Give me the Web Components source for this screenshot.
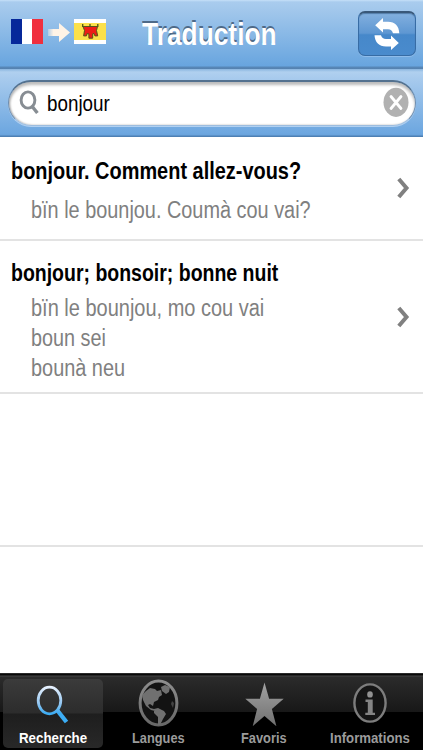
<!DOCTYPE html>
<html lang="fr"><head><meta charset="utf-8"><title>Traduction</title>
<style>html,body{margin:0;height:100%;background:#fff;overflow:hidden}body{font-family:"Liberation Sans",Arial,sans-serif}</style></head>
<body><translate-app></translate-app>
<script>
const define=(name,html,setup)=>customElements.define(name,class extends HTMLElement{
  connectedCallback(){
    if(this.shadowRoot)return;
    const t=document.createElement('template');t.innerHTML=html;
    this.attachShadow({mode:'open'}).appendChild(t.content.cloneNode(true));
    if(setup)setup(this,this.shadowRoot);
  }
});

/* One line of text condensed horizontally to a given width */
define('fit-text',`<style>:host{display:block;flex:none;white-space:nowrap}span{display:inline-block;transform-origin:0 50%}</style><span><slot></slot></span>`,
(h,r)=>{const s=r.querySelector('span'),w=+h.getAttribute('w');h.style.width=w+'px';s.style.transform='scaleX('+w/s.offsetWidth+')';});

define('french-flag',`<style>:host{display:flex;width:32px;height:25px}i{flex:1}</style><i style="background:#06289a"></i><i style="background:#fff"></i><i style="background:#f02f3e"></i>`);

define('auvergne-flag',`<style>:host{display:block;width:32px;height:25px}svg{display:block}</style>
<svg width="32" height="25" viewBox="0 0 32 25"><path fill="#fff" d="M0 0h32v25H0z"/><path fill="#fbe04a" d="M0 4h32v17H0z"/>
<path fill="#ed1c16" stroke="#58531b" stroke-width="1" d="M9 7.5h14.5l-1 4 1.2 5.4h-2.8l-.9-2.4-1.3.3v4.4h-3.8v-4.3l-2-.2-.4 2.2H9.6l.9-5.4z"/>
<path stroke="#48521c" stroke-width="1.3" d="M8.7 5v3M16 5v3M23.8 5v3"/></svg>`);

define('refresh-button',`<style>:host{display:flex;box-sizing:border-box;width:58px;height:45px;border:1px solid #376ca5;border-top:2px solid #395879;border-radius:7px;background:linear-gradient(#83b0df,#5e97d2 48%,#4688ca 52%,#4a8bcd);box-shadow:0 1px 0 #8fbcea,inset 0 1px 1px #537da8;align-items:center;justify-content:center}</style>
<svg width="28" height="34" viewBox="0 0 28 34"><g fill="#fff"><path d="M2.2 8.2 10 1v3.8h5C22 4.8 26 9 26.3 16.3H20c-.8-2.8-2.3-4-5-4H10V15.5z"/><path d="M25.8 26 18 33v-3.6h-5C6 29.4 2 25.5 1.5 18.2H8c.8 2.6 2.3 3.8 5 3.8h5v-3.5z"/></g></svg>`);

define('title-bar',`<style>:host{display:flex;box-sizing:border-box;height:69px;padding:0 7px 0 11px;background:linear-gradient(#c6e0f8 0,#a9ccee 2px,#a0c6eb 12px,#68a5df 66px,#5788b9 67px,#5581ae 69px)}
.flags{display:flex;width:131px;padding-top:19px}.arrow{margin:3px 3px 0 4px;width:24px;height:20px}
fit-text{font:bold 32px/40px "Liberation Sans",sans-serif;color:#fff;text-shadow:0 -2px 0 #4e6a88;padding-top:14px}refresh-button{margin:11px 0 0 auto}</style>
<div class="flags"><french-flag></french-flag><svg class="arrow" viewBox="0 0 24 20"><defs><linearGradient id="a"><stop stop-color="#fff3e6" stop-opacity=".35"/><stop offset=".25" stop-color="#fff3e6"/></linearGradient></defs><path fill="url(#a)" d="M1 7h11V1l11 9.5L12 20v-6H1z"/></svg><auvergne-flag></auvergne-flag></div>
<fit-text w="135">Traduction</fit-text><refresh-button></refresh-button>`);

define('search-bar',`<style>:host{display:flex;box-sizing:border-box;height:68px;padding:11px 7px 11px 8px;background:linear-gradient(#89b5df 0,#b0d0ef 3px,#a7caed 10px,#6da7e0 64px,#69a3dc 66px,#4d80b4 67px)}
.field{display:flex;flex:1;align-items:flex-start;box-sizing:border-box;border-radius:23px;border:1px solid #6c8cae;border-top:2px solid #53718f;border-bottom-color:#9dbddf;background:#fff;box-shadow:inset 0 3px 3px #bcbcbc,inset 1px 0 2px #aaa,0 1px 0 #b1d1f2}
.glass{margin:8px 7px 0 10px;flex:none}fit-text{font:21.5px/28px "Liberation Sans",sans-serif;color:#000;margin-top:7.5px}.clear{margin:5px 6px 0 auto}</style>
<div class="field"><svg class="glass" width="21" height="25" viewBox="0 0 21 25"><ellipse cx="9" cy="10" rx="6.9" ry="8.1" fill="none" stroke="#878d93" stroke-width="2.9"/><path stroke="#878d93" stroke-width="3.4" d="m13 16.2 5.4 6.8"/></svg>
<fit-text w="63">bonjour</fit-text>
<svg class="clear" width="26" height="31" viewBox="0 0 26 31"><ellipse cx="13" cy="15.3" rx="12.5" ry="14.6" fill="#b1b1b1"/><path stroke="#fff" stroke-width="2.8" stroke-linecap="round" d="m8 9.5 10 12m0-12-10 12"/></svg></div>`);

define('result-row',`<style>:host{display:flex;box-sizing:border-box;border-bottom:2px solid #e3e3e3;align-items:center;justify-content:space-between;padding:0 13px 0 10.5px;background:#fff}svg{flex:none;margin-top:1px}.text{align-self:flex-start}</style>
<div class="text"><slot></slot></div><svg width="13" height="22" viewBox="0 0 13 22"><path d="m1.8 2 7.7 9-7.7 9" fill="none" stroke="#808080" stroke-width="4"/></svg>`,
(h,r)=>{if(h.hasAttribute('empty'))r.querySelector('svg').remove();});

define('tab-bar',`<style>:host{display:grid;grid-template-columns:repeat(4,100px);justify-content:space-between;box-sizing:border-box;height:77px;padding:6px 3px 0;background:linear-gradient(#4c4c4c 0,#080808 1px,#080808 2px,#454545 3px,#2b2b2b 4px,#181818 38.5px,#000 39.5px)}
.tab{display:flex;flex-direction:column;align-items:center;height:69px;border-radius:5px;color:#9b9b9b}
.active{color:#fff;background:linear-gradient(#3b3b3b,#2c2c2c 34px,#1e1e1e 35px,#282828)}
svg{display:block;flex:none}fit-text{font:bold 14.5px/18px "Liberation Sans",sans-serif}</style>
<div class="tab active"><svg width="50" height="50" viewBox="0 0 50 50"><defs><linearGradient id="b" x1="0" y1="6" x2="0" y2="44" gradientUnits="userSpaceOnUse"><stop stop-color="#f0f5ff"/><stop offset=".5" stop-color="#91c5f0"/><stop offset=".75" stop-color="#3dacf3"/><stop offset="1" stop-color="#3aaef6"/></linearGradient></defs><ellipse cx="21.5" cy="21.5" rx="11.3" ry="13.3" fill="none" stroke="url(#b)" stroke-width="2.8"/><path d="m29 31 9.5 12" stroke="url(#b)" stroke-width="4.3"/></svg><fit-text w="68">Recherche</fit-text></div>
<div class="tab"><svg width="50" height="50" viewBox="0 0 50 50"><defs><linearGradient id="c" x1="0" y1="0" x2="0" y2="1"><stop stop-color="#8d8d8d"/><stop offset="1" stop-color="#686868"/></linearGradient></defs><ellipse cx="24.5" cy="24" rx="18.4" ry="22" fill="#131313" stroke="url(#c)" stroke-width="3"/><path fill="#707070" d="m12 12 4-3 5 1 2 2 4-1 1 5-3 2-1 3-4 2-1 4-3-2-2 1 2 3 4 1 1 2-4-1-5-4-3-6-1-5zM27 8l4-2 5 2-1 5-3 2-4-3zM20 30l4-1 6 3 2 3-3 5-3 6-2 0 0-8-4-4z"/><path fill="#444" d="m38 22 2 2-1 5-2-4z"/></svg><fit-text w="53">Langues</fit-text></div>
<div class="tab"><svg width="50" height="50" viewBox="0 0 50 50"><defs><linearGradient id="d" x1="0" y1="0" x2="0" y2="1"><stop stop-color="#a2a2a2"/><stop offset="1" stop-color="#707070"/></linearGradient></defs><path fill="url(#d)" d="m25.5 3.5 4.6 16.3h14.6L32.9 30l4.5 17.2L25.5 37 13.7 47.2 18.1 30 6.3 19.8h14.6z"/></svg><fit-text w="46">Favoris</fit-text></div>
<div class="tab"><svg width="50" height="50" viewBox="0 0 50 50"><ellipse cx="25" cy="24" rx="15.6" ry="18.6" fill="#151515" stroke="#7d7d7d" stroke-width="2.4"/><ellipse cx="25" cy="15.4" rx="2.8" ry="3.2" fill="#929292"/><path fill="#858585" d="M20.5 20.5h7.2v13.2H30V36H20.3v-2.3h2.5V23h-2.3z"/></svg><fit-text w="80">Informations</fit-text></div>`);

define('translate-app',`<style>:host{display:flex;flex-direction:column;height:750px;width:423px}tab-bar{margin-top:auto}
.t{font:bold 23.5px/28px "Liberation Sans",sans-serif;color:#000}.s{font:23.5px/30px "Liberation Sans",sans-serif;color:#808080;margin-left:20px}</style>
<title-bar></title-bar><search-bar></search-bar>
<result-row style="height:103.5px"><fit-text class="t" w="290" style="margin-top:19.5px">bonjour. Comment allez-vous?</fit-text><fit-text class="s" w="280" style="margin-top:10px">bïn le bounjou. Coumà cou vai?</fit-text></result-row>
<result-row style="height:153.5px"><fit-text class="t" w="267" style="margin-top:18.5px">bonjour; bonsoir; bonne nuit</fit-text><fit-text class="s" w="233" style="margin-top:6px">bïn le bounjou, mo cou vai</fit-text><fit-text class="s" w="75">boun sei</fit-text><fit-text class="s" w="94">bounà neu</fit-text></result-row>
<result-row empty style="height:153px"></result-row>
<tab-bar></tab-bar>`);
</script></body></html>
